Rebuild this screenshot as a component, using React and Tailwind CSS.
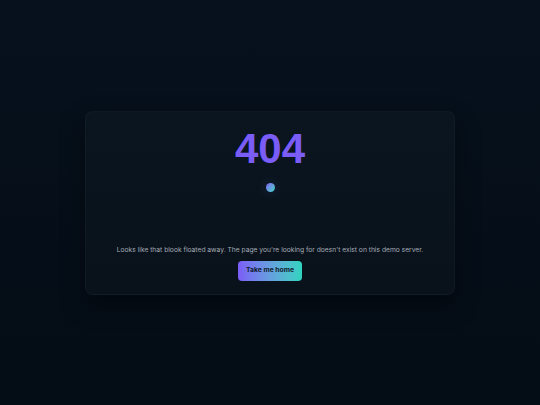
import React from 'react';

const NotFound = () => {
  return (
    <div
      className="min-h-screen w-full flex items-center justify-center bg-gradient-to-b from-[#07111d] to-[#040c15]"
      style={{ fontFamily: 'Inter, "Noto Sans", sans-serif' }}
    >
      {/* Card */}
      <div className="w-[370px] h-[184px] rounded-[8px] border border-[#ffffff08] bg-gradient-to-b from-[#0b151f] to-[#09121b] shadow-[0_10px_24px_rgba(0,0,0,0.45)] flex flex-col items-center pt-[16px]">
        <h1 className="font-['Liberation_Sans',Arial,sans-serif] text-[42px] leading-none font-bold text-[#7a5cf6]">404</h1>

        {/* floating blob */}
        <div className="mt-[13px] w-[9px] h-[9px] rounded-full bg-gradient-to-br from-[#7c5cf6] to-[#2dd4bf] shadow-[0_0_8px_3px_rgba(80,120,220,0.1)]" />

        <p className="mt-[53px] text-[6.7px] leading-[10px] text-[#a4abb6]">
          Looks like that blook floated away. The page you're looking for doesn't exist on this demo server.
        </p>

        <button className="mt-[6px] w-[64px] h-[20px] rounded-[4px] bg-gradient-to-r from-[#7b5cf7] to-[#2dd4bf] text-[6.8px] font-bold text-[#111a2e]">
          Take me home
        </button>
      </div>
    </div>
  );
};

export default function App() {
  return <NotFound />;
}
